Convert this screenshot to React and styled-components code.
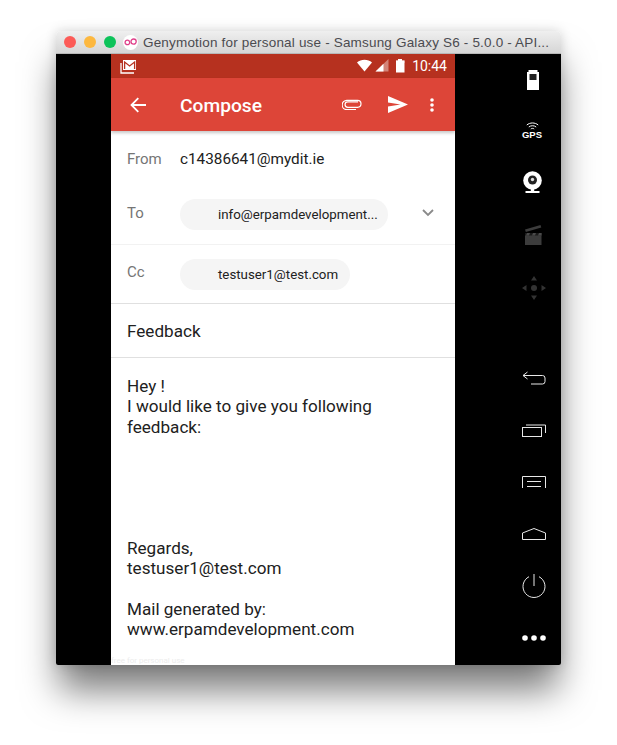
import React from 'react';
import styled, { createGlobalStyle } from 'styled-components';

const GlobalStyle = createGlobalStyle`
  html, body {
    margin: 0;
    padding: 0;
    background: #fff;
  }
  body {
    width: 617px;
    height: 745px;
    overflow: hidden;
    font-family: Roboto, "Liberation Sans", sans-serif;
  }
`;

const Desktop = styled.div`
  padding: 31px 56px 0 56px;
`;

const Window = styled.div`
  width: 505px;
  height: 634px;
  display: flex;
  flex-direction: column;
  border-radius: 5px 5px 2px 2px;
  box-shadow: 0 28px 36px -3px rgba(0, 0, 0, 0.52), 0 0 12px rgba(0, 0, 0, 0.16);
`;

const TitleBar = styled.div`
  height: 23px;
  flex: none;
  display: flex;
  align-items: center;
  padding-left: 8px;
  border-radius: 5px 5px 0 0;
  background: linear-gradient(#efefef, #d6d6d6);
  box-sizing: border-box;
  border-bottom: 1px solid #b8b8b8;
`;

const Light = styled.span`
  width: 12px;
  height: 12px;
  border-radius: 50%;
  margin-right: 8px;
  background: ${p => p.$color};
`;

const AppBadge = styled.span`
  width: 15px;
  height: 15px;
  border-radius: 50%;
  background: #fff;
  margin-left: -1px;
  margin-right: 5px;
  display: flex;
  align-items: center;
  justify-content: center;
`;

const WindowTitle = styled.span`
  font-family: "Liberation Sans", Arial, sans-serif;
  font-size: 13.5px;
  color: #4b4b50;
  white-space: nowrap;
  letter-spacing: 0.18px;
`;

const Screen = styled.div`
  flex: 1;
  display: flex;
  background: #000;
  border-radius: 0 0 2px 2px;
  overflow: hidden;
`;

const Phone = styled.div`
  margin-left: 55px;
  width: 344px;
  display: flex;
  flex-direction: column;
  background: #fff;
  position: relative;
  overflow: hidden;
`;

const StatusBar = styled.div`
  height: 24px;
  flex: none;
  display: flex;
  align-items: center;
  padding: 0 8px 0 9px;
  background: #b6311f;
`;

const Clock = styled.span`
  color: #fff;
  font-size: 14px;
  margin-left: 6px;
`;

const Toolbar = styled.div`
  height: 53px;
  flex: none;
  display: flex;
  align-items: center;
  padding: 0 21px 0 19px;
  background: #dd4538;
  box-shadow: 0 2px 3px rgba(0, 0, 0, 0.22);
  position: relative;
`;

const Heading = styled.span`
  color: #fff;
  font-size: 19.2px;
  font-weight: 500;
  margin-left: 34px;
  margin-right: auto;
  margin-top: 1px;
`;

const Row = styled.div`
  display: flex;
  align-items: flex-start;
  box-sizing: border-box;
  height: ${p => p.$height}px;
  padding: ${p => p.$top}px 20px 0 16px;
  border-bottom: ${p => (p.$line ? `1px solid ${p.$line}` : 'none')};
`;

const Label = styled.span`
  width: 53px;
  flex: none;
  font-size: 15px;
  line-height: ${p => p.$lineHeight || 26}px;
  color: #757575;
`;

const Value = styled.span`
  font-size: 15.3px;
  line-height: 26px;
  color: #212121;
`;

const Chip = styled.div`
  height: 31px;
  width: ${p => p.$width}px;
  box-sizing: border-box;
  padding-left: 38px;
  border-radius: 16px;
  background: #f5f5f5;
  font-size: 13.3px;
  line-height: 31px;
  color: #212121;
  white-space: nowrap;
`;

const Chevron = styled.svg`
  margin-left: auto;
  margin-top: 10px;
  margin-right: 1px;
`;

const Subject = styled.div`
  height: 54px;
  flex: none;
  box-sizing: border-box;
  padding-left: 16px;
  border-bottom: 1px solid #e0e0e0;
  font-size: 17.1px;
  line-height: 55px;
  color: #212121;
`;

const Message = styled.div`
  padding: 18px 16px 0;
  font-size: 17.1px;
  line-height: 20.25px;
  color: #212121;
  white-space: pre-line;
`;

const Watermark = styled.span`
  position: absolute;
  left: 0;
  bottom: 0;
  font-size: 8px;
  line-height: 9px;
  color: #ececec;
`;

const SidePanel = styled.div`
  flex: 1;
  display: flex;
  flex-direction: column;
  justify-content: space-between;
  padding: 0 0 1px 52px;
`;

const SideGroup = styled.div`
  display: flex;
  flex-direction: column;
`;

const SideSlot = styled.div`
  height: ${p => p.$height}px;
  display: flex;
  align-items: center;
  justify-content: center;
  padding-right: ${p => p.$nudge || 0}px;
`;

const GpsLabel = styled.span`
  font-family: "Liberation Sans", Arial, sans-serif;
  font-size: 9.5px;
  line-height: 10px;
  font-weight: 700;
  color: #fff;
`;

const GpsStack = styled.div`
  display: flex;
  flex-direction: column;
  align-items: center;
`;

const GenyLogo = () => (
  <svg width="13" height="8" viewBox="0 0 13 8" fill="none" stroke="#e0408a" strokeWidth="1.3">
    <circle cx="3.4" cy="4.4" r="2.3" />
    <circle cx="9.6" cy="3.6" r="2.6" />
  </svg>
);

const GmailNote = () => (
  <svg width="17" height="15" viewBox="0 0 17 15" style={{ display: 'block' }}>
    <path d="M3 1h13v10H3z" fill="#fff" />
    <path d="M4.6 10V3l5 4 5-4v7" fill="none" stroke="#b6311f" strokeWidth="1.3" />
    <path d="M1 4v10h13" fill="none" stroke="#fff" strokeWidth="1.3" />
  </svg>
);

const StatusIcons = () => (
  <svg width="50" height="16" viewBox="0 0 50 16" style={{ marginLeft: 'auto' }}>
    <path d="M1 4.500C5 .8 12 .8 16 4.500L8.500 13.500z" fill="#fff" />
    <path d="M19.500 13.500L32.500 1v12.500z" fill="#fff" fillOpacity="0.4" />
    <path d="M19.500 13.500L27.500 5.800v7.700z" fill="#fff" />
    <path d="M42 1h4v1.500h2.500v12H40V2.500h2z" fill="#fff" />
    <path d="M40 2.500h8.500v2.500H40z" fill="#fff" fillOpacity="0.55" />
  </svg>
);

const BackArrow = () => (
  <svg width="16" height="16" viewBox="0 0 16 16" fill="none" stroke="#fff" strokeWidth="1.8">
    <path d="M16 8H1.500M8.300 1.200L1.500 8l6.800 6.800" />
  </svg>
);

const Clip = () => (
  <svg width="20" height="11" viewBox="0 0 20 11" fill="none" stroke="#fff" strokeWidth="1.2" style={{ marginRight: 26 }}>
    <path d="M16 2.500H5.800a2.600 2.600 0 0 0 0 5.500H15.500a3.300 3.300 0 0 0 0-7H4.800a4.200 4.200 0 0 0 0 9.300H14" transform="translate(0 .3)" />
  </svg>
);

const Send = () => (
  <svg width="20" height="17" viewBox="0 0 20 17" style={{ marginRight: 22 }}>
    <path d="M0 0l20 8.500L0 17v-6.600l12.500-1.900L0 6.600z" fill="#fff" />
  </svg>
);

const MoreDots = () => (
  <svg width="4" height="14" viewBox="0 0 4 14" fill="#fff">
    <circle cx="2" cy="2" r="1.800" />
    <circle cx="2" cy="7" r="1.800" />
    <circle cx="2" cy="12" r="1.800" />
  </svg>
);

const ChevronDown = () => (
  <Chevron width="12" height="8" viewBox="0 0 12 8" fill="none" stroke="#8a8a8a" strokeWidth="1.800">
    <path d="M1 1l5 5 5-5" />
  </Chevron>
);

const BatteryTool = () => (
  <svg width="12" height="20" viewBox="0 0 12 20">
    <path d="M1.500 0h9v2H12v18H0V2h1.500z" fill="#fff" />
    <rect x="2.500" y="4" width="7" height="6" fill="#222" />
  </svg>
);

const GpsTool = () => (
  <GpsStack>
    <svg width="13" height="8" viewBox="0 0 13 8" fill="none" stroke="#fff" strokeWidth="1">
      <path d="M.8 3C4 .3 9 .3 12.200 3M2.800 5C4.900 3.300 8.100 3.300 10.200 5M4.800 7c1-.8 2.400-.8 3.400 0" />
    </svg>
    <GpsLabel>GPS</GpsLabel>
  </GpsStack>
);

const CameraTool = () => (
  <svg width="19" height="22" viewBox="0 0 19 22">
    <circle cx="9.500" cy="9.500" r="9.300" fill="#fff" />
    <circle cx="9.500" cy="9" r="4.500" fill="#222" />
    <circle cx="9.500" cy="8.500" r="1.700" fill="#ddd" />
    <rect x="7.800" y="17" width="3.400" height="3" fill="#fff" />
    <rect x="2.500" y="20" width="14" height="2" fill="#fff" />
  </svg>
);

const ClapperTool = () => (
  <svg width="17" height="20" viewBox="0 0 17 20" fill="#3c3c3c">
    <rect x="0" y="8" width="16.500" height="12" />
    <path d="M0 4.500L15.500 0l.8 2.500L.8 7z" />
    <path d="M0 8h16.500v2.500H0z" fill="#1a1a1a" />
    <path d="M2 8h3l-1 2.500H1zM8 8h3l-1 2.500H7zM14 8h2.500v2.500H13z" fill="#4a4a4a" />
  </svg>
);

const DpadTool = () => (
  <svg width="24" height="24" viewBox="0 0 24 24" fill="#333">
    <path d="M12 0l3 4.500H9zM12 24l-3-4.500h6zM0 12l4.500-3v6zM24 12l-4.500 3V9z" />
    <circle cx="12" cy="12" r="3" />
  </svg>
);

const BackTool = () => (
  <svg width="24" height="14" viewBox="0 0 24 14" fill="none" stroke="#e8e8e8" strokeWidth="1">
    <path d="M5.500 1L1 4.500 5.500 8M1 4.500h19.500a2.500 2.500 0 0 1 2.500 2.500v3.500a2.500 2.500 0 0 1-2.500 2.500H9" />
  </svg>
);

const RecentsTool = () => (
  <svg width="24" height="13" viewBox="0 0 24 13" fill="none" stroke="#e8e8e8" strokeWidth="1">
    <rect x=".500" y="3.500" width="19" height="9" />
    <path d="M4 1h19.500v8" />
  </svg>
);

const MenuTool = () => (
  <svg width="24" height="12" viewBox="0 0 24 12" fill="none" stroke="#e8e8e8" strokeWidth="1">
    <path d="M.5 12V.5h23V12M5 5.500h14M5 10.500h14" />
  </svg>
);

const HomeTool = () => (
  <svg width="24" height="12" viewBox="0 0 24 12" fill="none" stroke="#e8e8e8" strokeWidth="1">
    <path d="M.5 5L12 .5 23.500 5v6.500H.5z" />
  </svg>
);

const PowerTool = () => (
  <svg width="24" height="24" viewBox="0 0 24 24" fill="none" stroke="#e8e8e8" strokeWidth="1">
    <path d="M7 2.700a11 11 0 1 0 10 0M12 0v12" />
  </svg>
);

const OverflowTool = () => (
  <svg width="24" height="6" viewBox="0 0 24 6" fill="#fff">
    <circle cx="3" cy="3" r="2.800" />
    <circle cx="12" cy="3" r="2.800" />
    <circle cx="21" cy="3" r="2.800" />
  </svg>
);

const bodyText = `Hey !
I would like to give you following
feedback:





Regards,
testuser1@test.com

Mail generated by:
www.erpamdevelopment.com`;

export default function App() {
  return (
    <Desktop>
      <GlobalStyle />
      <Window>
        <TitleBar>
          <Light $color="#fc5b57" />
          <Light $color="#fdb83f" />
          <Light $color="#0dc35a" />
          <AppBadge><GenyLogo /></AppBadge>
          <WindowTitle>Genymotion for personal use - Samsung Galaxy S6 - 5.0.0 - API...</WindowTitle>
        </TitleBar>
        <Screen>
          <Phone>
            <StatusBar>
              <GmailNote />
              <StatusIcons />
              <Clock>10:44</Clock>
            </StatusBar>
            <Toolbar>
              <BackArrow />
              <Heading>Compose</Heading>
              <Clip />
              <Send />
              <MoreDots />
            </Toolbar>
            <Row $height={56} $top={15}>
              <Label>From</Label>
              <Value>c14386641@mydit.ie</Value>
            </Row>
            <Row $height={58} $top={12} $line="#f2f2f2">
              <Label $lineHeight={28}>To</Label>
              <Chip $width={208}>info@erpamdevelopment...</Chip>
              <ChevronDown />
            </Row>
            <Row $height={59} $top={14} $line="#e0e0e0">
              <Label>Cc</Label>
              <Chip $width={170}>testuser1@test.com</Chip>
            </Row>
            <Subject>Feedback</Subject>
            <Message>{bodyText}</Message>
            <Watermark>free for personal use</Watermark>
          </Phone>
          <SidePanel>
            <SideGroup>
              <SideSlot $height={51} $nudge={3}><BatteryTool /></SideSlot>
              <SideSlot $height={51} $nudge={4}><GpsTool /></SideSlot>
              <SideSlot $height={51} $nudge={3}><CameraTool /></SideSlot>
              <SideSlot $height={55} $nudge={2}><ClapperTool /></SideSlot>
              <SideSlot $height={51}><DpadTool /></SideSlot>
            </SideGroup>
            <SideGroup>
              <SideSlot $height={52}><BackTool /></SideSlot>
              <SideSlot $height={52}><RecentsTool /></SideSlot>
              <SideSlot $height={52}><MenuTool /></SideSlot>
              <SideSlot $height={52}><HomeTool /></SideSlot>
              <SideSlot $height={52}><PowerTool /></SideSlot>
              <SideSlot $height={52}><OverflowTool /></SideSlot>
            </SideGroup>
          </SidePanel>
        </Screen>
      </Window>
    </Desktop>
  );
}
